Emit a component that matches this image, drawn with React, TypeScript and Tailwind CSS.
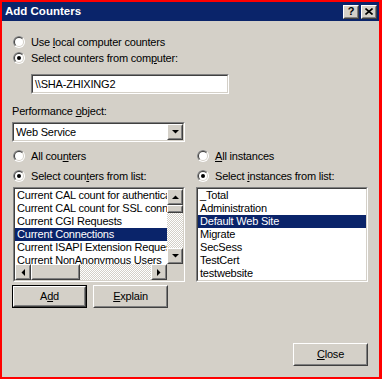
import React from 'react';

const Radio = ({ checked }: { checked?: boolean }) => (
  <svg width="12" height="12" viewBox="0 0 12 12" className="shrink-0">
    <circle cx="6" cy="6" r="6" fill="#ffffff" />
    <path d="M1.757 10.243 A6 6 0 0 1 10.243 1.757 Z" fill="#808080" />
    <circle cx="6" cy="6" r="5" fill="#d4d0c8" />
    <path d="M2.464 9.536 A5 5 0 0 1 9.536 2.464 Z" fill="#404040" />
    <circle cx="6" cy="6" r="4" fill="#ffffff" />
    {checked && <circle cx="6" cy="6" r="2" fill="#000000" />}
  </svg>
);

const RadioRow = ({ checked, children }: { checked?: boolean; children: React.ReactNode }) => (
  <div className="flex items-center gap-[6px] h-[16px]">
    <Radio checked={checked} />
    <span className="leading-[13px]">{children}</span>
  </div>
);

const Sunken = ({ className = '', children }: { className?: string; children?: React.ReactNode }) => (
  <div className={`border border-t-[#808080] border-l-[#808080] border-r-white border-b-white ${className}`}>
    <div className="border border-t-[#404040] border-l-[#404040] border-r-[#d4d0c8] border-b-[#d4d0c8] h-full bg-white">
      {children}
    </div>
  </div>
);

const Raised = ({ className = '', children }: { className?: string; children?: React.ReactNode }) => (
  <div className={`border border-t-white border-l-white border-r-[#404040] border-b-[#404040] bg-[#d4d0c8] ${className}`}>
    <div className="border border-t-[#d4d0c8] border-l-[#d4d0c8] border-r-[#808080] border-b-[#808080] h-full w-full flex items-center justify-center">
      {children}
    </div>
  </div>
);

type Dir = 'up' | 'down' | 'left' | 'right';

const arrowPoints: Record<Dir, string> = {
  up: '0,4 7,4 3.5,0.5',
  down: '0,0 7,0 3.5,3.5',
  left: '4,0 4,7 0.5,3.5',
  right: '0,0 0,7 3.5,3.5',
};

const Arrow = ({ dir }: { dir: Dir }) => {
  const vertical = dir === 'up' || dir === 'down';
  return (
    <svg width={vertical ? 7 : 4} height={vertical ? 4 : 7} viewBox={vertical ? '0 0 7 4' : '0 0 4 7'}>
      <polygon points={arrowPoints[dir]} fill="#000000" />
    </svg>
  );
};

const ScrollButton = ({ dir }: { dir: Dir }) => (
  <Raised className="w-[16px] h-[16px] shrink-0">
    <Arrow dir={dir} />
  </Raised>
);

// dithered scrollbar track
const Track = ({ className = '' }: { className?: string }) => (
  <div
    className={`bg-[image:repeating-conic-gradient(#d4d0c8_0%_25%,#ffffff_0%_50%)] bg-[length:2px_2px] ${className}`}
  />
);

const Button = ({ children, isDefault }: { children: React.ReactNode; isDefault?: boolean }) =>
  isDefault ? (
    <div className="border border-black w-[75px] h-[23px]">
      <Raised className="w-full h-full">{children}</Raised>
    </div>
  ) : (
    <Raised className="w-[75px] h-[23px]">{children}</Raised>
  );

const counters = [
  'Current CAL count for authenticated users',
  'Current CAL count for SSL connections',
  'Current CGI Requests',
  'Current Connections',
  'Current ISAPI Extension Requests',
  'Current NonAnonymous Users',
];

const instances = ['_Total', 'Administration', 'Default Web Site', 'Migrate', 'SecSess', 'TestCert', 'testwebsite'];

const Item = ({ text, selected }: { text: string; selected?: boolean }) => (
  <div
    className={`h-[13px] leading-[13px] pl-[2px] whitespace-nowrap overflow-hidden ${
      selected ? 'bg-[#0a246a] text-white' : 'text-black'
    }`}
  >
    {text}
  </div>
);

export default function App() {
  return (
    <div className="w-[382px] h-[379px] bg-[#ff0000] pl-[2px] pt-[2px] pr-[3px] pb-[2px] flex flex-col font-['Liberation_Sans',Arial,sans-serif] text-[11px] tracking-[-0.2px] text-black select-none">
      {/* title bar */}
      <div className="h-[19px] bg-[#0a246a] flex items-center pl-[3px] pr-[2px] shrink-0">
        <span className="text-white font-bold text-[11.5px] tracking-normal flex-1">Add Counters</span>
        <div className="flex gap-[2px]">
          <Raised className="w-[16px] h-[14px]">
            <span className="font-bold text-[11px] leading-none">?</span>
          </Raised>
          <Raised className="w-[16px] h-[14px]">
            <svg width="8" height="7" viewBox="0 0 8 7">
              <path d="M0.5 0.5 L7.5 6.5 M7.5 0.5 L0.5 6.5" stroke="#000" strokeWidth="1.6" />
            </svg>
          </Raised>
        </div>
      </div>

      {/* body */}
      <div className="flex-1 bg-[#d4d0c8] px-[11px] pt-[13px] flex flex-col">
        <RadioRow>
          Use <u>l</u>ocal computer counters
        </RadioRow>
        <RadioRow checked>
          Select counters from com<u>p</u>uter:
        </RadioRow>

        <Sunken className="ml-[18px] mt-[8px] w-[198px] h-[20px]">
          <div className="pl-[2px] leading-[16px]">\\SHA-ZHIXING2</div>
        </Sunken>

        <div className="-ml-px mt-[10px] h-[14px] leading-[14px]">
          Performance <u>o</u>bject:
        </div>

        <Sunken className="-ml-px mt-[4px] w-[173px] h-[20px]">
          <div className="flex items-center h-full">
            <span className="flex-1 pl-[2px] leading-[16px]">Web Service</span>
            <ScrollButton dir="down" />
          </div>
        </Sunken>

        <div className="grid grid-cols-[172px_172px] gap-x-[11px] mt-[6px]">
          <div className="flex flex-col">
            <RadioRow>
              All cou<u>n</u>ters
            </RadioRow>
            <div className="mt-[4px]">
              <RadioRow checked>
                Select coun<u>t</u>ers from list:
              </RadioRow>
            </div>
            <Sunken className="mt-[3px] h-[95px]">
              <div className="flex h-full">
                <div className="flex flex-col w-[152px]">
                  <div className="h-[75px] overflow-hidden">
                    {counters.map((c) => (
                      <Item key={c} text={c} selected={c === 'Current Connections'} />
                    ))}
                  </div>
                  <div className="flex h-[16px]">
                    <ScrollButton dir="left" />
                    <Raised className="w-[49px] h-[16px]" />
                    <Track className="flex-1" />
                    <ScrollButton dir="right" />
                  </div>
                </div>
                <div className="flex flex-col w-[16px]">
                  <ScrollButton dir="up" />
                  <Raised className="w-[16px] h-[8px] shrink-0" />
                  <Track className="flex-1" />
                  <ScrollButton dir="down" />
                  <div className="h-[16px] bg-[#d4d0c8] shrink-0" />
                </div>
              </div>
            </Sunken>
          </div>

          <div className="flex flex-col">
            <div className="ml-px">
              <RadioRow>
                <u>A</u>ll instances
              </RadioRow>
            </div>
            <div className="ml-px mt-[4px]">
              <RadioRow checked>
                Select <u>i</u>nstances from list:
              </RadioRow>
            </div>
            <Sunken className="mt-[3px] h-[95px]">
              <div className="h-full overflow-hidden">
                {instances.map((i) => (
                  <Item key={i} text={i} selected={i === 'Default Web Site'} />
                ))}
              </div>
            </Sunken>
          </div>
        </div>

        <div className="flex gap-[6px] -ml-px mt-[3px]">
          <Button isDefault>
            A<u>d</u>d
          </Button>
          <Button>
            <u>E</u>xplain
          </Button>
        </div>

        <div className="flex justify-end mt-[35px]">
          <Button>
            <u>C</u>lose
          </Button>
        </div>
      </div>
    </div>
  );
}
